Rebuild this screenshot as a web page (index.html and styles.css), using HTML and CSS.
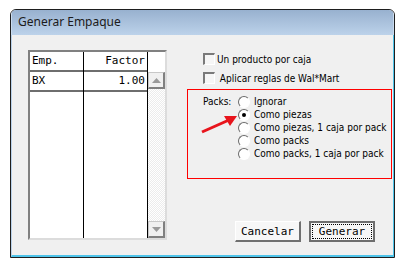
FILE: index.html
```html
<!DOCTYPE html>
<html lang="es">
<head>
  <meta charset="UTF-8" />
  <title>Generar Empaque</title>
  <link rel="stylesheet" href="styles.css">
</head>
<body>

  <div class="window">
    <div class="titlebar">Generar Empaque</div>
    <div class="client">

      <!-- lista de empaques -->
      <div class="list">
        <div class="col emp">
          <div class="cell head">Emp.</div>
          <div class="cell">BX</div>
        </div>
        <div class="col factor">
          <div class="cell head">Factor</div>
          <div class="cell">1.00</div>
        </div>
        <div class="scroll">
          <div class="scroll-top"></div>
          <div class="sbtn">
            <svg width="9" height="5" viewBox="0 0 9 5"><path d="M0 5 L4.5 0 L9 5 Z" fill="#9a9a9a"/></svg>
          </div>
          <div class="track"></div>
          <div class="sbtn">
            <svg width="9" height="5" viewBox="0 0 9 5"><path d="M0 0 L4.5 5 L9 0 Z" fill="#9a9a9a"/></svg>
          </div>
        </div>
      </div>

      <div class="side">
        <label class="check"><span class="box"></span>Un producto por caja</label>
        <label class="check"><span class="box"></span>&nbsp;Aplicar reglas de Wal*Mart</label>

        <div class="packs">
          <div class="packs-label">Packs:</div>
          <div class="radios">
            <div class="radio"><span class="dot"></span>Ignorar</div>
            <div class="radio"><span class="dot on"></span>Como piezas</div>
            <div class="radio"><span class="dot"></span>Como piezas, 1 caja por pack</div>
            <div class="radio"><span class="dot"></span>Como packs</div>
            <div class="radio"><span class="dot"></span>Como packs, 1 caja por pack</div>
          </div>
          <svg class="arrow" width="40" height="22" viewBox="0 0 40 22">
            <line x1="1" y1="20" x2="28" y2="8" stroke="#e8141c" stroke-width="3"/>
            <path d="M36 4 L23 4 L29 14 Z" fill="#e8141c"/>
          </svg>
        </div>

        <div class="buttons">
          <button class="btn">Cancelar</button>
          <button class="btn default"><span class="focus">Generar</span></button>
        </div>
      </div>

    </div>
  </div>

</body>
</html>
```

FILE: styles.css
```css
:root {
  --face: #f0f0f0;
  --frame-dark: #1e1e1e;
  --frame-blue: #4ec4ea;
  --red: #ff0000;
}
body {
  margin: 0;
  background: #fff;
  font-family: 'DejaVu Sans Mono', monospace;
  font-size: 11px;
  color: #000;
}
.window {
  margin: 9px 0 0 10px;
  width: 385px;
  height: 249px;
  box-sizing: border-box;
  border: 1px solid var(--frame-dark);
  border-radius: 6px 6px 0 0;
  display: flex;
  flex-direction: column;
  overflow: hidden;
}
.titlebar {
  height: 25px;
  line-height: 24px;
  padding-left: 6px;
  background: linear-gradient(#98b1cf, #bcd2ea);
  font-family: 'Noto Sans', sans-serif;
  font-size: 12px;
  color: #1b1b1b;
  border-left: 1px solid #c9dbee;
  border-right: 1px solid #c9dbee;
}
.client {
  flex: 1;
  display: flex;
  background: var(--face);
  padding: 15px 1px 0 16px;
  border-left: 1px solid #b9d1ea;
  border-right: 1px solid var(--frame-blue);
  border-bottom: 2px solid var(--frame-blue);
}

/* lista */
.list {
  width: 139px;
  height: 190px;
  box-sizing: border-box;
  border: 2px solid #dcdcdc;
  border-top-color: #808080;
  border-left-color: #808080;
  background: #fff;
  display: flex;
}
.col {
  border-right: 1px solid #000;
}
.emp { width: 53px; }
.factor { width: 63px; text-align: right; }
.cell {
  height: 18px;
  line-height: 18px;
  padding: 0 2px;
  border-bottom: 2px solid #6e6e6e;
}
.scroll {
  width: 17px;
  display: flex;
  flex-direction: column;
}
.scroll-top {
  height: 20px;
}
.sbtn {
  height: 17px;
  box-sizing: border-box;
  border: 1px solid #808080;
  border-top-color: #c8c8c8;
  border-left-color: #c8c8c8;
  border-right-width: 2px;
  border-bottom-width: 2px;
  background: #f0f0f0;
  display: flex;
  align-items: center;
  justify-content: center;
}
.track {
  flex: 1;
  background: repeating-conic-gradient(#fff 0 25%, #ececec 0 50%) 0 0 / 2px 2px;
}

/* lado derecho */
.side {
  width: 206px;
  margin-left: 20px;
  display: flex;
  flex-direction: column;
  font-family: 'DejaVu Sans Condensed', 'Liberation Sans', sans-serif;
  font-size: 10px;
}
.check {
  display: flex;
  align-items: center;
  gap: 2px;
  height: 12px;
  margin: 3px 0 0 16px;
}
.check + .check {
  margin-top: 7px;
}
.box {
  width: 12px;
  height: 12px;
  box-sizing: border-box;
  border: 1px solid #fff;
  border-top: 2px solid #7a7a7a;
  border-left: 2px solid #7a7a7a;
  background: #f6f6f6;
}
.packs {
  position: relative;
  margin-top: 5px;
  height: 90px;
  box-sizing: border-box;
  border: 1px solid var(--red);
  padding: 5px 0 0 15px;
  display: flex;
}
.packs-label {
  width: 35px;
  height: 13px;
  line-height: 13px;
}
.radio {
  display: flex;
  align-items: center;
  gap: 4px;
  height: 13px;
  line-height: 13px;
  white-space: nowrap;
}
.dot {
  width: 12px;
  height: 12px;
  box-sizing: border-box;
  border-radius: 50%;
  border: 1px solid #fff;
  border-top-color: #6a6a6a;
  border-left-color: #6a6a6a;
  background: #fff;
  display: flex;
  align-items: center;
  justify-content: center;
}
.dot.on::after {
  content: "";
  width: 4px;
  height: 4px;
  border-radius: 50%;
  background: #000;
}
.arrow {
  position: absolute;
  left: 13px;
  top: 22px;
}

/* botones */
.buttons {
  display: flex;
  justify-content: flex-end;
  gap: 8px;
  margin: 42px 17px 0 0;
}
.btn {
  width: 66px;
  height: 21px;
  box-sizing: border-box;
  padding: 0;
  font-family: 'DejaVu Sans Mono', monospace;
  font-size: 11px;
  color: #000;
  background: #f7f7f7;
  border: 1px solid #fff;
  border-right: 2px solid #707070;
  border-bottom: 2px solid #707070;
}
.btn.default {
  border: 2px solid #6e6e6e;
  padding: 1px;
}
.focus {
  display: block;
  height: 100%;
  box-sizing: border-box;
  border: 1px dotted #000;
  line-height: 13px;
}
```
